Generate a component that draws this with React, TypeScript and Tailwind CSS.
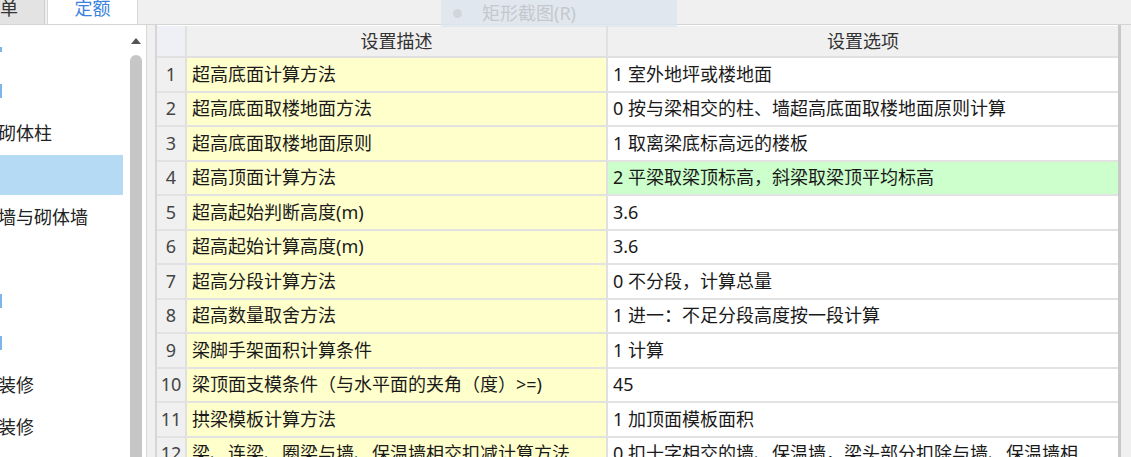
const rows = [
  { desc: "超高底面计算方法", value: "1 室外地坪或楼地面" },
  { desc: "超高底面取楼地面方法", value: "0 按与梁相交的柱、墙超高底面取楼地面原则计算" },
  { desc: "超高底面取楼地面原则", value: "1 取离梁底标高远的楼板" },
  { desc: "超高顶面计算方法", value: "2 平梁取梁顶标高，斜梁取梁顶平均标高", active: true },
  { desc: "超高起始判断高度(m)", value: "3.6" },
  { desc: "超高起始计算高度(m)", value: "3.6" },
  { desc: "超高分段计算方法", value: "0 不分段，计算总量" },
  { desc: "超高数量取舍方法", value: "1 进一：不足分段高度按一段计算" },
  { desc: "梁脚手架面积计算条件", value: "1 计算" },
  { desc: "梁顶面支模条件（与水平面的夹角（度）>=)", value: "45" },
  { desc: "拱梁模板计算方法", value: "1 加顶面模板面积" },
  { desc: "梁、连梁、圈梁与墙、保温墙相交扣减计算方法", value: "0 扣十字相交的墙、保温墙，梁头部分扣除与墙、保温墙相" },
];

const treeItems = [
  { label: "", mark: "short" },
  { label: "", mark: "long" },
  { label: "砌体柱" },
  { label: "", selected: true },
  { label: "墙与砌体墙" },
  { label: "" },
  { label: "", mark: "long" },
  { label: "", mark: "long" },
  { label: "装修" },
  { label: "装修" },
];

const font = "font-['Noto_Sans','Noto_Sans_CJK_SC',sans-serif]";

const TreeList = () => (
  <div className="flex w-[146px] shrink-0 bg-white">
    <div className="flex w-[128px] flex-col overflow-hidden pt-[3px]">
      {treeItems.map((item, i) => (
        <div key={i} className="flex h-[42px] shrink-0 items-center">
          <div
            className={`flex h-[40px] w-[123px] items-center ${
              item.selected ? "bg-[#b5dbf4]" : ""
            }`}
          >
            {item.mark && (
              <div
                className={`w-[2px] bg-[#7fb6ea] ${
                  item.mark === "short" ? "h-[5px]" : "h-[14px]"
                }`}
              />
            )}
            {item.label && (
              <span className="-ml-[2px] text-[18px] text-[#222]">
                {item.label}
              </span>
            )}
          </div>
        </div>
      ))}
    </div>
    <div className="flex w-[16px] flex-col items-center pt-[12px]">
      <svg width="12" height="8" viewBox="0 0 12 8">
        <path d="M1 7 L6 1 L11 7 Z" fill="#555" />
      </svg>
      <div className="mt-[10px] w-[12px] flex-1 rounded-t-full bg-[#c6c6c6]" />
    </div>
  </div>
);

const SettingsTable = () => (
  <div className="flex flex-1 flex-col pt-[1px]">
    <div className="flex h-[32px] shrink-0 border-b-2 border-[#e0e0e0] bg-[#f0f0f0]">
      <div className="w-[30px] border-r-2 border-[#e0e0e0] bg-[#eef0f5]" />
      <div className="flex w-[421px] items-center justify-center border-r-2 border-[#e0e0e0] text-[18px] text-[#333]">
        设置描述
      </div>
      <div className="flex flex-1 items-center justify-center text-[18px] text-[#333]">
        设置选项
      </div>
    </div>
    {rows.map((r, i) => (
      <div key={i} className="flex h-[34.5px] shrink-0 border-b-2 border-[#e2e2e2]">
        <div className="flex w-[30px] items-center justify-center border-r-2 border-[#e0e0e0] bg-[#f0f0f0] text-[18px] text-[#444]">
          {i + 1}
        </div>
        <div className="flex w-[421px] items-center overflow-hidden whitespace-nowrap border-r-2 border-[#e0e0e0] bg-[#ffffcc] pl-[5px] text-[18px] text-[#1a1a1a]">
          {r.desc}
        </div>
        <div
          className={`flex flex-1 items-center overflow-hidden whitespace-nowrap pl-[5px] text-[18px] text-[#1a1a1a] ${
            r.active ? "bg-[#ccffcc]" : "bg-white"
          }`}
        >
          {r.value}
        </div>
      </div>
    ))}
  </div>
);

export default function App() {
  return (
    <div className={`relative flex h-[457px] w-[1131px] flex-col overflow-hidden bg-[#f0f0f0] ${font}`}>
      <div className="flex h-[25px] shrink-0 border-b border-[#d4d4d4] bg-[#f0f0f0]">
        <div className="flex w-[45px] items-center border-r border-[#d0d0d0] bg-[#e3e3e3] text-[18px] text-[#333]">
          <span className="-mt-[7px]">单</span>
        </div>
        <div className="ml-[2px] flex w-[91px] items-center justify-center border-x border-[#d8d8d8] bg-white text-[18px] text-[#3b82e0]">
          <span className="-mt-[7px]">定额</span>
        </div>
      </div>
      <div className="flex flex-1 overflow-hidden">
        <TreeList />
        <div className="w-[9px] shrink-0 border-l border-[#d8d8d8] bg-[#f0f0f0]" />
        <div className="flex w-[963px] shrink-0 border-l-2 border-[#d6d6d6] bg-white">
          <SettingsTable />
        </div>
        <div className="w-[3px] shrink-0 bg-[#c9c9c9]" />
        <div className="flex-1 bg-[#f0f0f0]" />
      </div>
      <div className="absolute left-[441px] top-0 flex h-[27px] w-[236px] items-center bg-[#dde5ef]/80 pl-[12px]">
        <div className="h-[9px] w-[9px] rounded-full bg-[#d2d6db]" />
        <span className="ml-[20px] text-[18px] text-[#c4c8ce]">矩形截图(R)</span>
      </div>
    </div>
  );
}
